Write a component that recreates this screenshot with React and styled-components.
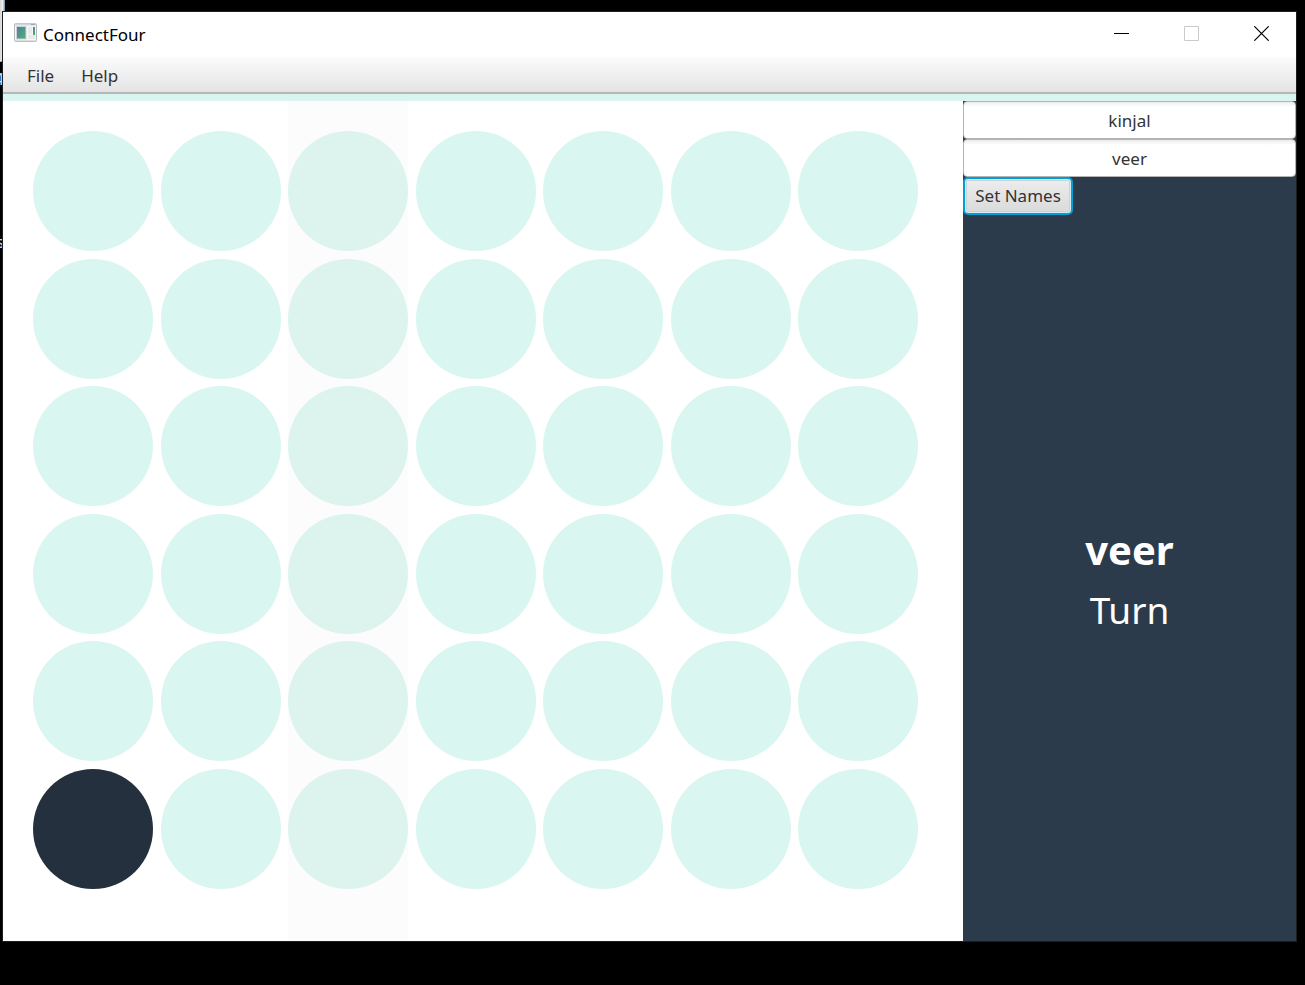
import React, { useState } from 'react';
import styled, { createGlobalStyle } from 'styled-components';

const GlobalStyle = createGlobalStyle`
  *, *::before, *::after { box-sizing: border-box; }
  body {
    margin: 0;
    background: #000;
    font-family: "Noto Sans", "Open Sans", sans-serif;
  }
  button, input { font: inherit; }
`;

const Desktop = styled.div`
  position: relative;
  display: flex;
  min-height: 100vh;
  padding: 11px 8px 43px 2px;
  overflow: hidden;
`;

const BackWindow = styled.div`
  position: absolute;
  top: 0;
  left: 0;
  width: 5px;
  height: 62px;
  background: linear-gradient(90deg, #d4d4d4, #f2f2f2 60%, #7d9db5 80%);
  border-radius: 0 0 5px 0;
`;

const IconCaption = styled.span`
  position: absolute;
  top: ${({ $top }) => $top}px;
  right: calc(100% - 4px);
  color: #cfe3f5;
  font-size: 16px;
  line-height: 20px;
  white-space: nowrap;
`;

const Window = styled.main`
  position: relative;
  display: flex;
  flex: 1;
  flex-direction: column;
  min-width: 0;
  border: 1px solid #1b1f22;
  background: #fff;
`;

const TitleBar = styled.header`
  display: flex;
  align-items: center;
  height: 45px;
  padding-left: 11px;
`;

const Title = styled.h1`
  flex: 1;
  margin: 0 0 0 6px;
  color: #000;
  font-size: 17px;
  font-weight: 400;
  line-height: 24px;
`;

const AppIcon = styled.svg`
  display: block;
  width: 23px;
  height: 19px;
  margin-bottom: 4px;
`;

const WindowButton = styled.button`
  display: grid;
  place-items: center;
  width: 70px;
  height: 43px;
  padding: 0 0 2px;
  border: 0;
  background: transparent;
  color: ${({ disabled }) => (disabled ? '#cacaca' : '#000')};
  svg { display: block; }
`;

const MenuBar = styled.nav`
  display: flex;
  align-items: center;
  height: 37px;
  padding: 2px 12px 0;
  border-bottom: 2px solid #b5b8b7;
  background: linear-gradient(#fbfbfb, #e4e4e4);
`;

const MenuButton = styled.button`
  padding: 0 12px;
  border: 0;
  background: transparent;
  color: #333;
  font-size: 17px;
  line-height: 24px;
  & + & { margin-left: 3px; }
`;

const Content = styled.div`
  display: flex;
  flex: 1;
  border-top: 7px solid #daf5ef;
`;

const Board = styled.section`
  display: flex;
  flex: 1;
  justify-content: space-between;
  min-width: 0;
  padding: 0 45px 0 30px;
`;

const Column = styled.button`
  display: flex;
  flex: 0 1 120px;
  flex-direction: column;
  justify-content: space-between;
  min-width: 0;
  padding: 30px 0 52px;
  border: 0;
  background: ${({ $active }) => ($active ? '#fcfcfc' : 'transparent')};
`;

const Slot = styled.span`
  display: block;
  width: 100%;
  aspect-ratio: 1;
  border-radius: 50%;
  background: ${({ $state }) =>
    ({ disc: '#24303e', hover: '#dcf4ed', empty: '#daf6f0' })[$state]};
`;

const SidePanel = styled.aside`
  display: flex;
  flex: 0 0 333px;
  flex-direction: column;
  background: #2c3b4b;
`;

const NameField = styled.input`
  width: 100%;
  height: 38px;
  padding: 0 8px;
  border: 1px solid #b4b4b4;
  border-radius: 4px;
  outline: 0;
  background: linear-gradient(#ececec, #fff 5px);
  color: #333;
  font-size: 17px;
  line-height: 24px;
  text-align: center;
`;

const SetNamesButton = styled.button`
  align-self: flex-start;
  width: 110px;
  height: 38px;
  padding: 0;
  border: 2px solid #039ed3;
  border-radius: 5px;
  outline: 0;
  background: linear-gradient(#ededed, #dadada);
  box-shadow: inset 0 0 0 1px #d5edf5, inset 0 0 0 2px #c3d5da;
  color: #333;
  font-size: 17px;
  line-height: 24px;
`;

const Status = styled.div`
  display: flex;
  flex: 1;
  flex-direction: column;
  justify-content: center;
  padding-top: 4px;
  color: #fff;
  text-align: center;
`;

const PlayerName = styled.strong`
  font-size: 40px;
  font-weight: 700;
  line-height: 60px;
`;

const TurnLabel = styled.span`
  font-size: 37px;
  line-height: 60px;
`;

const COLUMNS = 7;
const ROWS = 6;

function slotState(column, row, active) {
  if (column === 0 && row === ROWS - 1) return 'disc';
  return active ? 'hover' : 'empty';
}

export default function App() {
  const [activeColumn, setActiveColumn] = useState(2);
  const [names, setNames] = useState(['kinjal', 'veer']);
  const rename = (index) => (event) =>
    setNames(names.map((name, i) => (i === index ? event.target.value : name)));

  return (
    <Desktop>
      <GlobalStyle />
      <BackWindow />
      <IconCaption $top={69}>4</IconCaption>
      <IconCaption $top={232}>s</IconCaption>
      <Window>
        <TitleBar>
          <AppIcon viewBox="0 0 23 19" aria-hidden="true">
            <defs>
              <linearGradient id="pane" x1="0" y1="0" x2="1" y2="1">
                <stop offset="0" stopColor="#4c7fa6" />
                <stop offset="1" stopColor="#55b070" />
              </linearGradient>
            </defs>
            <rect x="0.5" y="0.5" width="22" height="18" rx="1" fill="#f7f7f7" stroke="#b3b9bf" />
            <path d="M1 1.5h21" stroke="#cdd6e0" strokeWidth="2" />
            <path d="M17 1.5h4" stroke="#9dabc0" />
            <rect x="2.5" y="3.5" width="9.5" height="12.5" fill="url(#pane)" stroke="#cfd3d6" />
            <path d="M14 4h4v7h-4zM14 12h7v4h-7z" fill="#e9e9e9" />
            <path d="M19 4h2v8h-2z" fill="url(#pane)" />
            <path d="M1 18h21" stroke="#c3c8cc" />
          </AppIcon>
          <Title>ConnectFour</Title>
          <WindowButton aria-label="Minimize">
            <svg width="15" height="15"><path d="M0 7.5h15" stroke="currentColor" /></svg>
          </WindowButton>
          <WindowButton aria-label="Maximize" disabled>
            <svg width="15" height="15"><path d="M.5 .5h14v14H.5z" fill="none" stroke="currentColor" /></svg>
          </WindowButton>
          <WindowButton aria-label="Close">
            <svg width="15" height="15"><path d="M.3 .3l14.4 14.4M14.7 .3L.3 14.7" stroke="currentColor" strokeWidth="1.2" /></svg>
          </WindowButton>
        </TitleBar>
        <MenuBar>
          <MenuButton>File</MenuButton>
          <MenuButton>Help</MenuButton>
        </MenuBar>
        <Content>
          <Board aria-label="Board">
            {Array.from({ length: COLUMNS }, (_, column) => {
              const active = column === activeColumn;
              return (
                <Column
                  key={column}
                  $active={active}
                  aria-label={`Column ${column + 1}`}
                  onMouseEnter={() => setActiveColumn(column)}
                >
                  {Array.from({ length: ROWS }, (_, row) => (
                    <Slot key={row} $state={slotState(column, row, active)} />
                  ))}
                </Column>
              );
            })}
          </Board>
          <SidePanel>
            <NameField aria-label="Player one name" value={names[0]} onChange={rename(0)} />
            <NameField aria-label="Player two name" value={names[1]} onChange={rename(1)} />
            <SetNamesButton>Set Names</SetNamesButton>
            <Status>
              <PlayerName>{names[1]}</PlayerName>
              <TurnLabel>Turn</TurnLabel>
            </Status>
          </SidePanel>
        </Content>
      </Window>
    </Desktop>
  );
}
